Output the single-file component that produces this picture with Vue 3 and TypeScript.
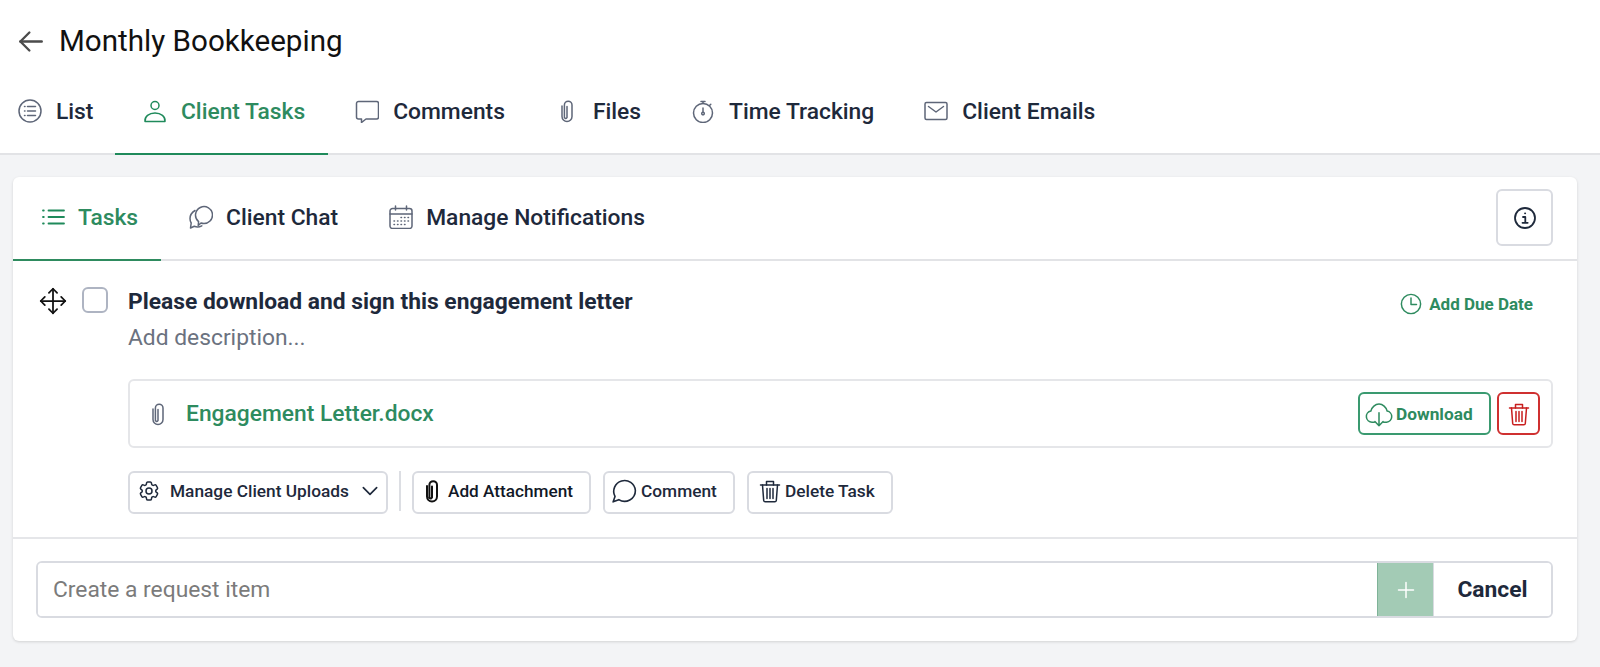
<script setup lang="ts">
import { h } from "vue";

const icons: Record<string, string[]> = {
  arrow: ["M22 12H3", "M11 4 3 12l8 8"],
  listCircle: ["M23 12a11 11 0 1 1-22 0 11 11 0 0 1 22 0z", "M9.500 7.500h8M9.500 12h8M9.500 16.500h8", "M6.500 7.500h.5M6.500 12h.5M6.500 16.500h.5"],
  user: ["M16 6.500a4 4 0 1 1-8 0 4 4 0 0 1 8 0z", "M2 22.500c-.6-4.800 4-8.500 10-8.500s10.600 3.700 10 8.500z"],
  comment: ["M3.500 2.500h18a2 2 0 0 1 2 2v13.500a2 2 0 0 1-2 2H11l-4.500 3.500V20h-3a2 2 0 0 1-2-2V4.500a2 2 0 0 1 2-2z"],
  clip: ["M7 7v10.500a5 5 0 0 0 10 0V6a3.800 3.800 0 0 0-7.600 0v11.500a1.300 1.300 0 0 0 2.600 1V7.500"],
  stopwatch: ["M21.500 14a9.500 9.500 0 1 1-19 0 9.500 9.500 0 0 1 19 0z", "M12 4.500V2.500M10 2.500h4M18.500 6.500l1.300-1.300", "M12 9v4", "M13.300 14.500a1.300 1.300 0 1 1-2.600 0 1.300 1.300 0 0 1 2.600 0z"],
  envelope: ["M2.500 3.500h19A1.500 1.500 0 0 1 23 5v14a1.500 1.500 0 0 1-1.500 1.500h-19A1.500 1.500 0 0 1 1 19V5a1.500 1.500 0 0 1 1.500-1.500z", "M4.500 7.500 12 13l7.500-5.500"],
  tasks: ["M7.500 5.500H23M7.500 12H23M7.500 18.500H23", "M2 5.500h.8M2 12h.8M2 18.500h.8"],
  chat: ["M23.500 10a8.500 8.500 0 0 1-8.500 8.500c-1.100 0-2-.1-3-.5l-2.800 2.500.4-3.800A8.500 8.500 0 1 1 23.500 10z", "M6 5.500C2.800 7.500 1 10.500 1 13.500c0 1.800.4 3.200 1.200 4.500L1.500 23l3.800-1.800c2 .9 5 .9 7.500-.4"],
  calendar: ["M3.500 3.500h17a2.500 2.500 0 0 1 2.500 2.500v15a2.500 2.500 0 0 1-2.500 2.500h-17A2.500 2.500 0 0 1 1 21V6a2.500 2.500 0 0 1 2.500-2.500z", "M6.500 1v4M17.500 1v4M1 9h22", "M12 12.500h.5M15.500 12.500h.5M19 12.500h.5M5 16h.5M8.500 16h.5M12 16h.5M15.500 16h.5M19 16h.5M5 19.500h.5M8.500 19.500h.5M12 19.500h.5M15.500 19.500h.5"],
  info: ["M22 12a10 10 0 1 1-20 0 10 10 0 0 1 20 0z", "M10 11h2.300v5.700M9.500 16.800h5.200", "M12 7.300h.2"],
  move: ["M12 1.500v21M1.500 12h21", "M8.500 5 12 1.500 15.500 5M8.500 19l3.500 3.500 3.500-3.500M5 8.500 1.500 12 5 15.500M19 8.500l3.500 3.500-3.500 3.500"],
  clock: ["M22.500 12a10.500 10.500 0 1 1-21 0 10.500 10.500 0 0 1 21 0z", "M12 5.500v7h6"],
  cloud: ["M8 19H6a4.800 4.800 0 0 1-1-9.500C5.800 6 8.800 3.500 12 3.500s6.200 2.500 7 6A4.800 4.800 0 0 1 18.500 19H16", "M12 11v11M8.500 18.500 12 22l3.500-3.500"],
  trash: ["M2.500 6h19", "M8.500 6V2.500h7V6", "M4.500 6l1.200 15.500a1.500 1.500 0 0 0 1.500 1.300h9.600a1.500 1.500 0 0 0 1.500-1.300L19.500 6", "M9 9.500v10M12 9.500v10M15 9.500v10"],
  gear: [
    "M9.594 3.94c.09-.542.56-.94 1.110-.94h2.593c.55 0 1.020.398 1.110.94l.213 1.281c.063.374.313.686.645.87.074.04.147.083.22.127.324.196.72.257 1.075.124l1.217-.456a1.125 1.125 0 0 1 1.370.49l1.296 2.247a1.125 1.125 0 0 1-.26 1.431l-1.003.827c-.293.24-.438.613-.431.992a6.759 6.759 0 0 1 0 .255c-.007.378.138.75.43.99l1.005.828c.424.35.534.954.26 1.430l-1.298 2.247a1.125 1.125 0 0 1-1.369.491l-1.217-.456c-.355-.133-.75-.072-1.076.124a6.570 6.570 0 0 1-.22.128c-.331.183-.581.495-.644.869l-.213 1.280c-.09.543-.56.941-1.110.941h-2.594c-.55 0-1.020-.398-1.110-.94l-.213-1.281c-.062-.374-.312-.686-.644-.87a6.520 6.520 0 0 1-.22-.127c-.325-.196-.72-.257-1.076-.124l-1.217.456a1.125 1.125 0 0 1-1.369-.49l-1.297-2.247a1.125 1.125 0 0 1 .26-1.431l1.004-.827c.292-.24.437-.613.43-.992a6.932 6.932 0 0 1 0-.255c.007-.378-.138-.75-.43-.99l-1.004-.828a1.125 1.125 0 0 1-.26-1.430l1.297-2.247a1.125 1.125 0 0 1 1.370-.491l1.216.456c.356.133.751.072 1.076-.124.072-.044.146-.087.22-.128.332-.183.582-.495.644-.869l.214-1.281z",
    "M15 12a3 3 0 1 1-6 0 3 3 0 0 1 6 0z",
  ],
  chevron: ["M4 8l8 8 8-8"],
  bubble: ["M22.500 11.500a10 10 0 0 1-15.300 8.500L2 22l1.700-5A10 10 0 1 1 22.500 11.500z"],
  plus: ["M12 3v18M3 12h18"],
};

const Icon = (props: { name: string }) =>
  h(
    "svg",
    { viewBox: "0 0 24 24", fill: "none", stroke: "currentColor", "stroke-linecap": "round", "stroke-linejoin": "round" },
    icons[props.name].map((d) => h("path", { d })),
  );
Icon.props = ["name"];

const mainTabs = [
  { label: "List", icon: "listCircle" },
  { label: "Client Tasks", icon: "user", active: true },
  { label: "Comments", icon: "comment" },
  { label: "Files", icon: "clip" },
  { label: "Time Tracking", icon: "stopwatch" },
  { label: "Client Emails", icon: "envelope" },
];

const subTabs = [
  { label: "Tasks", icon: "tasks", active: true },
  { label: "Client Chat", icon: "chat" },
  { label: "Manage Notifications", icon: "calendar" },
];
</script>

<template>
  <div class="page">
    <header class="header">
      <div class="title-row">
        <Icon name="arrow" class="back" />
        <h1>Monthly Bookkeeping</h1>
      </div>
      <nav class="main-tabs">
        <a v-for="t in mainTabs" :key="t.label" class="main-tab" :class="{ active: t.active }">
          <Icon :name="t.icon" class="tab-icon" />
          <span>{{ t.label }}</span>
        </a>
      </nav>
    </header>

    <section class="card">
      <div class="sub-bar">
        <a v-for="t in subTabs" :key="t.label" class="sub-tab" :class="{ active: t.active }">
          <Icon :name="t.icon" class="tab-icon" />
          <span>{{ t.label }}</span>
        </a>
        <button type="button" class="info-btn"><Icon name="info" /></button>
      </div>

      <div class="task">
        <Icon name="move" class="move" />
        <span class="check"></span>
        <div class="task-body">
          <div class="task-head">
            <strong>Please download and sign this engagement letter</strong>
            <a class="due"><Icon name="clock" />Add Due Date</a>
          </div>
          <p class="desc">Add description...</p>

          <div class="attachment">
            <Icon name="clip" class="att-clip" />
            <a class="att-name">Engagement Letter.docx</a>
            <button type="button" class="download"><Icon name="cloud" />Download</button>
            <button type="button" class="remove"><Icon name="trash" /></button>
          </div>

          <div class="actions">
            <button type="button" class="action uploads">
              <Icon name="gear" class="gear" />Manage Client Uploads<Icon name="chevron" class="chev" />
            </button>
            <span class="divider"></span>
            <button type="button" class="action attach"><Icon name="clip" />Add Attachment</button>
            <button type="button" class="action comment"><Icon name="bubble" />Comment</button>
            <button type="button" class="action delete"><Icon name="trash" />Delete Task</button>
          </div>
        </div>
      </div>

      <div class="create">
        <div class="create-box">
          <input type="text" placeholder="Create a request item" />
          <button type="button" class="add"><Icon name="plus" /></button>
          <button type="button" class="cancel">Cancel</button>
        </div>
      </div>
    </section>
  </div>
</template>

<style>
html,
body {
  margin: 0;
  background: #f3f4f6;
}
</style>

<style scoped>
.page {
  min-height: 667px;
  background: #f3f4f6;
  font-family: Roboto, "Liberation Sans", sans-serif;
  color: #1e293b;
  overflow: hidden;
}
.header {
  background: #fff;
  border-bottom: 2px solid #e2e3e6;
  height: 155px;
  box-sizing: border-box;
}
.title-row {
  height: 82px;
  display: flex;
  align-items: center;
  padding-left: 17px;
  gap: 15px;
}
.back {
  width: 27px;
  height: 27px;
  stroke-width: 2.1;
  color: #4b4b4b;
}
h1 {
  margin: 0;
  font-size: 29.600px;
  font-weight: 400;
  color: #111;
}
.main-tabs {
  display: flex;
  height: 73px;
}
.main-tab {
  display: flex;
  align-items: center;
  gap: 14px;
  height: 58px;
  padding: 0 22.500px 15px 27.500px;
  font-size: 22.800px;
  font-weight: 465;
}
.main-tab:first-child {
  padding-left: 18px;
  padding-right: 22px;
}
.main-tab.active {
  color: #2e8b5f;
  box-shadow: inset 0 -2px 0 #1f8a5b;
}
.tab-icon {
  width: 24px;
  height: 24px;
  stroke-width: 1.5;
  color: #5e6678;
  flex: none;
}
.active .tab-icon {
  color: #1f8a5b;
}
.card {
  margin: 22px 23px 0 13px;
  height: 464px;
  background: #fff;
  border-radius: 6px;
  box-shadow: 0 1px 3px rgba(0, 0, 0, 0.14);
}
.sub-bar {
  display: flex;
  align-items: stretch;
  height: 84px;
  border-bottom: 2px solid #e2e3e6;
  box-sizing: border-box;
  padding-right: 24px;
}
.sub-tab {
  display: flex;
  align-items: center;
  gap: 13px;
  padding: 0 23px 4px 28px;
  font-size: 22.800px;
  font-weight: 465;
  margin-bottom: -2px;
}
.sub-tab.active {
  color: #2e8b5f;
  padding-right: 23px;
  box-shadow: inset 0 -2px 0 #2e8b5f;
}
.sub-tab.active .tab-icon {
  stroke-width: 1.8;
}
.info-btn {
  margin: 12px 0 0 auto;
  width: 57px;
  height: 57px;
  padding: 0;
  display: grid;
  place-items: center;
  background: #fff;
  border: 2px solid #d9dbe1;
  border-radius: 6px;
  color: #1e293b;
}
.info-btn svg {
  width: 24px;
  height: 24px;
  stroke-width: 1.8;
}
.task {
  display: flex;
  align-items: flex-start;
  height: 278px;
  padding: 26px 24px 0 26px;
  box-sizing: border-box;
  border-bottom: 2px solid #e5e6e9;
}
.move {
  width: 28px;
  height: 28px;
  stroke-width: 1.5;
  color: #111;
  flex: none;
}
.check {
  width: 26px;
  height: 26px;
  margin-left: 15px;
  box-sizing: border-box;
  border: 2px solid #aeb4c2;
  border-radius: 6px;
  flex: none;
}
.task-body {
  margin-left: 20px;
  flex: 1;
  min-width: 0;
}
.task-head {
  display: flex;
  justify-content: space-between;
  align-items: center;
  height: 26px;
  margin-top: 1px;
  padding-right: 20px;
}
.task-head strong {
  font-size: 22.800px;
  font-weight: 680;
}
.due {
  display: flex;
  align-items: center;
  gap: 7px;
  padding-top: 6px;
  font-size: 17px;
  font-weight: 700;
  color: #2e8b5f;
}
.due svg {
  width: 22px;
  height: 22px;
  stroke-width: 1.6;
}
.desc {
  margin: 11px 0 0;
  font-size: 22.800px;
  line-height: 26px;
  color: #6b7280;
}
.attachment {
  margin-top: 28px;
  height: 69px;
  box-sizing: border-box;
  display: flex;
  align-items: center;
  gap: 6px;
  padding: 0 11px 0 16px;
  border: 2px solid #e5e6e9;
  border-radius: 6px;
}
.att-clip {
  width: 24px;
  height: 24px;
  stroke-width: 1.5;
  color: #5e6678;
  flex: none;
}
.att-name {
  margin-left: 10px;
  margin-right: auto;
  font-size: 22.800px;
  font-weight: 500;
  color: #2e8b5f;
}
.download,
.remove {
  height: 43px;
  box-sizing: border-box;
  background: #fff;
  border-radius: 6px;
  display: flex;
  align-items: center;
  font-family: inherit;
}
.download {
  width: 133px;
  padding: 0 0 0 5px;
  gap: 3px;
  border: 2px solid #3a9a70;
  color: #2e8b5f;
  font-size: 17.300px;
  font-weight: 700;
}
.download svg {
  width: 28px;
  height: 28px;
  stroke-width: 1.3;
}
.remove {
  width: 43px;
  justify-content: center;
  padding: 0;
  border: 2px solid #cf3030;
  color: #c81e1e;
}
.remove svg {
  width: 24px;
  height: 24px;
  stroke-width: 1.5;
}
.actions {
  margin-top: 23px;
  display: flex;
  align-items: flex-start;
  gap: 12px;
}
.action {
  height: 43px;
  box-sizing: border-box;
  display: flex;
  align-items: center;
  padding: 0 0 3px;
  background: #fff;
  border: 2px solid #d9dbe1;
  border-radius: 6px;
  font-family: inherit;
  font-size: 17.300px;
  font-weight: 500;
  color: #1e293b;
}
.action svg {
  width: 24px;
  height: 24px;
  stroke-width: 1.5;
  flex: none;
}
.uploads {
  width: 260px;
  padding-left: 7px;
  gap: 9px;
}
.uploads .chev {
  width: 20px;
  height: 20px;
  stroke-width: 2;
  margin-left: 2px;
}
.divider {
  width: 2px;
  height: 40px;
  background: #dcdee3;
  margin: 0 -1px;
}
.attach {
  width: 179px;
  padding-left: 6px;
  gap: 4px;
  font-size: 17.200px;
  color: #111827;
}
.attach svg {
  stroke-width: 2;
  color: #111;
}
.comment {
  width: 132px;
  padding-left: 6px;
  gap: 4px;
}
.comment svg {
  width: 26px;
  height: 26px;
}
.delete {
  width: 146px;
  padding-left: 9px;
  gap: 3px;
}
.create {
  padding: 22px 24px 0 23px;
}
.create-box {
  display: flex;
  height: 57px;
  box-sizing: border-box;
  border: 2px solid #d9dbe1;
  border-radius: 6px;
  overflow: hidden;
}
.create-box input {
  flex: 1;
  min-width: 0;
  border: 0;
  outline: 0;
  padding: 0 15px;
  font-family: inherit;
  font-size: 22.800px;
  color: #1e293b;
}
.create-box input::placeholder {
  color: #7b7b7b;
  opacity: 1;
}
.add {
  width: 56px;
  padding: 0;
  margin: -2px 0;
  display: grid;
  place-items: center;
  background: #a3cbb5;
  border: 0;
  border-left: 1px solid #7fb398;
  color: #fff;
}
.add svg {
  width: 20px;
  height: 20px;
  stroke-width: 1.8;
}
.cancel {
  width: 118px;
  padding: 0;
  border: 0;
  border-left: 1px solid #d9dbe1;
  background: #fff;
  font-family: inherit;
  font-size: 22.800px;
  font-weight: 700;
  color: #1e293b;
}
</style>
